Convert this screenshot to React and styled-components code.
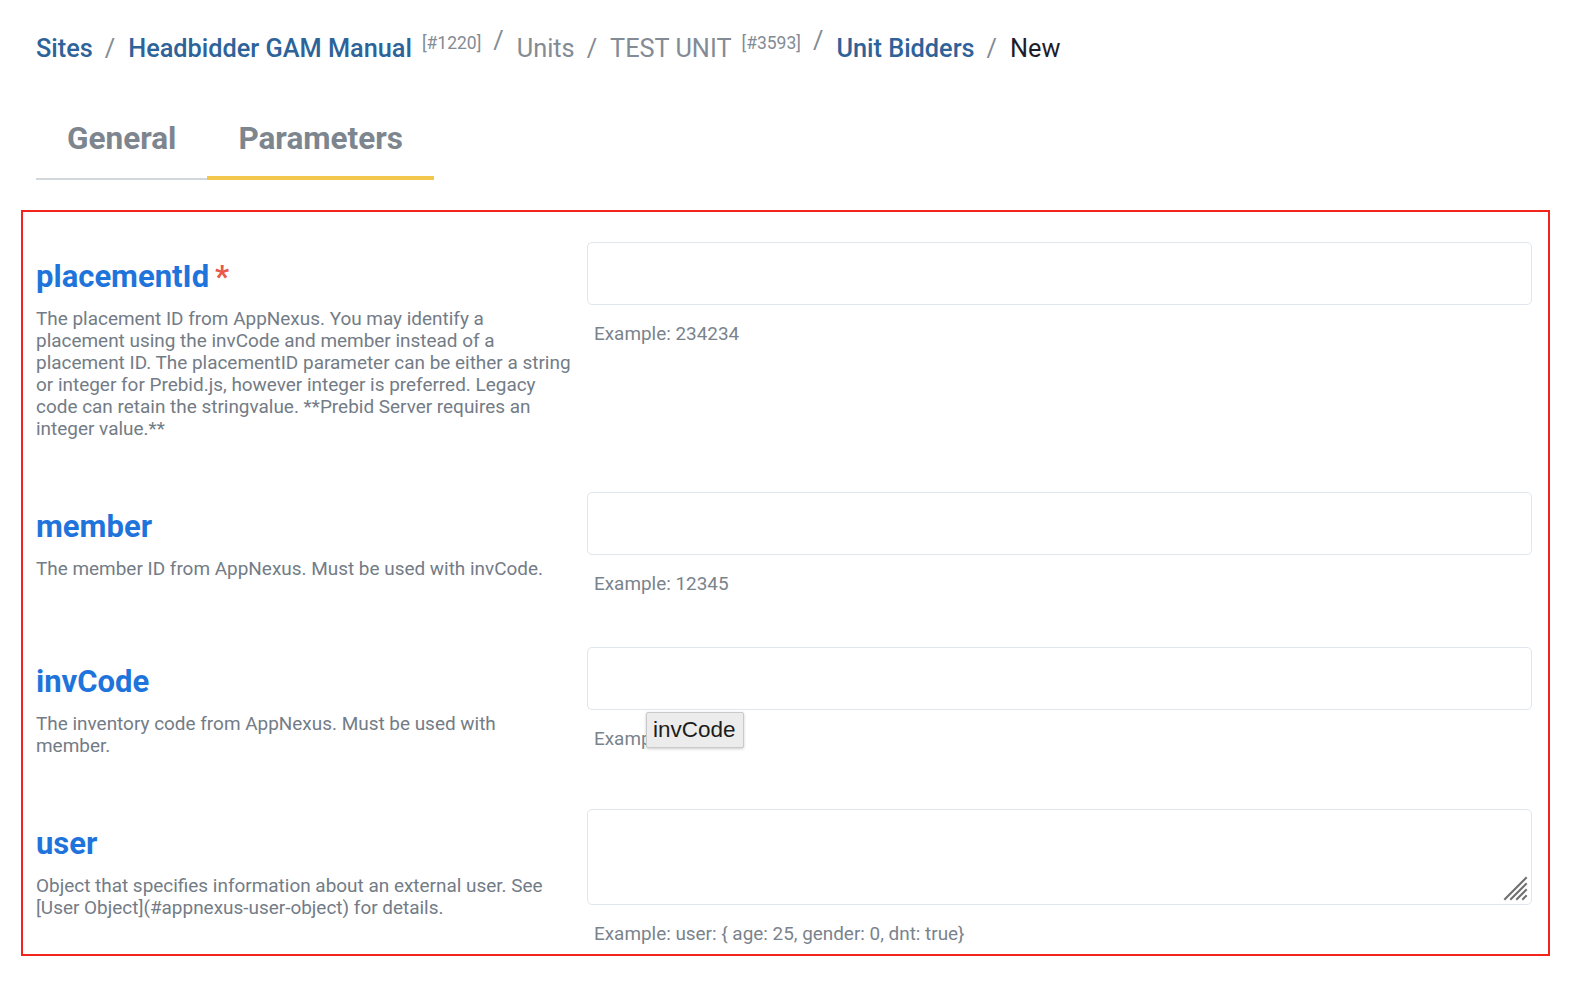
import React from "react";
import styled, { createGlobalStyle } from "styled-components";

const GlobalStyle = createGlobalStyle`
  body {
    margin: 0;
    background: #ffffff;
    font-family: Roboto, "Liberation Sans", sans-serif;
  }
`;

const Page = styled.div`
  padding: 26px 22px 30px 21px;
`;

const Breadcrumb = styled.nav`
  margin-left: 15px;
  font-size: 25.3px;
  line-height: 29px;
  white-space: nowrap;
`;

const Crumb = styled.span`
  color: ${(p) => (p.link ? "#2e6399" : p.current ? "#1c1d2b" : "#838b94")};
  font-weight: ${(p) => (p.link ? 500 : 400)};
`;

const Tag = styled.sup`
  font-size: 17.5px;
  line-height: 0;
  color: #838b94;
  margin-left: 10px;
  vertical-align: 8px;
`;

const Separator = styled.span`
  display: inline-block;
  color: #838b94;
  padding: 0 13px 0 12px;
  vertical-align: ${(p) => (p.raised ? "8px" : "baseline")};
`;

const Tabs = styled.div`
  display: flex;
  align-items: flex-end;
  margin: 42px 0 0 15px;
`;

const Tab = styled.div`
  padding: 16px 31px ${(p) => (p.active ? "19px" : "21px")} 31px;
  font-size: 31.5px;
  line-height: 36px;
  font-weight: 700;
  color: #7d858e;
  border-bottom: ${(p) => (p.active ? "4px solid #f3c74b" : "2px solid #d2d7dc")};
`;

const FormBox = styled.div`
  margin-top: 30px;
  border: 2px solid #f2231b;
  padding: 30px 16px 9px 13px;
  display: flex;
  flex-direction: column;
  gap: 52px;
`;

const Row = styled.div`
  display: grid;
  grid-template-columns: 536.5px 1fr;
  column-gap: 14.5px;
  align-items: start;
`;

const LabelCol = styled.div`
  padding-top: 16px;
`;

const Title = styled.div`
  font-size: 31px;
  line-height: 38px;
  font-weight: 700;
  color: #1f74dc;
`;

const Required = styled.span`
  color: #e8584c;
  margin-left: 6px;
`;

const Description = styled.p`
  margin: 12px 0 0;
  font-size: 18.95px;
  line-height: 22px;
  color: #737c86;
`;

const FieldCol = styled.div`
  position: relative;
  display: flex;
  flex-direction: column;
`;

const Input = styled.input`
  box-sizing: border-box;
  width: 100%;
  height: 63px;
  border: 1px solid #dfe6ee;
  border-radius: 5px;
  background: #ffffff;
  font-family: inherit;
  font-size: 18px;
  padding: 0 14px;
  outline: none;
`;

const AreaWrap = styled.div`
  position: relative;
`;

const TextArea = styled.textarea`
  display: block;
  box-sizing: border-box;
  width: 100%;
  height: 96px;
  border: 1px solid #dfe6ee;
  border-radius: 5px;
  background: #ffffff;
  font-family: inherit;
  font-size: 18px;
  padding: 12px 14px;
  resize: none;
  outline: none;
`;

const Grip = styled.svg`
  position: absolute;
  right: 3px;
  bottom: 3px;
  width: 28px;
  height: 28px;
  pointer-events: none;
`;

const Example = styled.div`
  margin-top: 18px;
  padding-left: 7px;
  font-size: 18.9px;
  line-height: 22px;
  color: #7a838c;
`;

const Tooltip = styled.div`
  position: absolute;
  left: 59px;
  top: 65px;
  padding: 5px 7px 5px 6px;
  background: #ececec;
  border: 1px solid #c9c9c9;
  border-radius: 2px;
  box-shadow: 0 1px 3px rgba(0, 0, 0, 0.2);
  font-family: "Liberation Sans", Arial, sans-serif;
  font-size: 22.5px;
  line-height: 24px;
  color: #1d1d1d;
`;

const params = [
  {
    name: "placementId",
    required: true,
    description:
      "The placement ID from AppNexus. You may identify a placement using the invCode and member instead of a placement ID. The placementID parameter can be either a string or integer for Prebid.js, however integer is preferred. Legacy code can retain the stringvalue. **Prebid Server requires an integer value.**",
    example: "Example: 234234",
  },
  {
    name: "member",
    description: "The member ID from AppNexus. Must be used with invCode.",
    example: "Example: 12345",
  },
  {
    name: "invCode",
    description: "The inventory code from AppNexus. Must be used with member.",
    example: "Example: abc123",
    tooltip: "invCode",
  },
  {
    name: "user",
    multiline: true,
    description:
      "Object that specifies information about an external user. See [User Object](#appnexus-user-object) for details.",
    example: "Example: user: { age: 25, gender: 0, dnt: true}",
  },
];

const ResizeGrip = () => (
  <Grip viewBox="0 0 28 28">
    <g stroke="#6f6f6f" strokeWidth="2" strokeLinecap="square">
      <line x1="4" y1="25" x2="25" y2="4" />
      <line x1="10" y1="25" x2="25" y2="10" />
      <line x1="16" y1="25" x2="25" y2="16" />
      <line x1="22" y1="25" x2="25" y2="22" />
    </g>
  </Grip>
);

const ParamRow = ({ param }) => (
  <Row>
    <LabelCol>
      <Title>
        {param.name}
        {param.required && <Required>*</Required>}
      </Title>
      <Description>{param.description}</Description>
    </LabelCol>
    <FieldCol>
      {param.multiline ? (
        <AreaWrap>
          <TextArea />
          <ResizeGrip />
        </AreaWrap>
      ) : (
        <Input type="text" />
      )}
      <Example>{param.example}</Example>
      {param.tooltip && <Tooltip>{param.tooltip}</Tooltip>}
    </FieldCol>
  </Row>
);

export default function App() {
  return (
    <Page>
      <GlobalStyle />
      <Breadcrumb>
        <Crumb link>Sites</Crumb>
        <Separator>/</Separator>
        <Crumb link>Headbidder GAM Manual</Crumb>
        <Tag>[#1220]</Tag>
        <Separator raised>/</Separator>
        <Crumb>Units</Crumb>
        <Separator>/</Separator>
        <Crumb>TEST UNIT</Crumb>
        <Tag>[#3593]</Tag>
        <Separator raised>/</Separator>
        <Crumb link>Unit Bidders</Crumb>
        <Separator>/</Separator>
        <Crumb current>New</Crumb>
      </Breadcrumb>
      <Tabs>
        <Tab>General</Tab>
        <Tab active>Parameters</Tab>
      </Tabs>
      <FormBox>
        {params.map((p) => (
          <ParamRow key={p.name} param={p} />
        ))}
      </FormBox>
    </Page>
  );
}
